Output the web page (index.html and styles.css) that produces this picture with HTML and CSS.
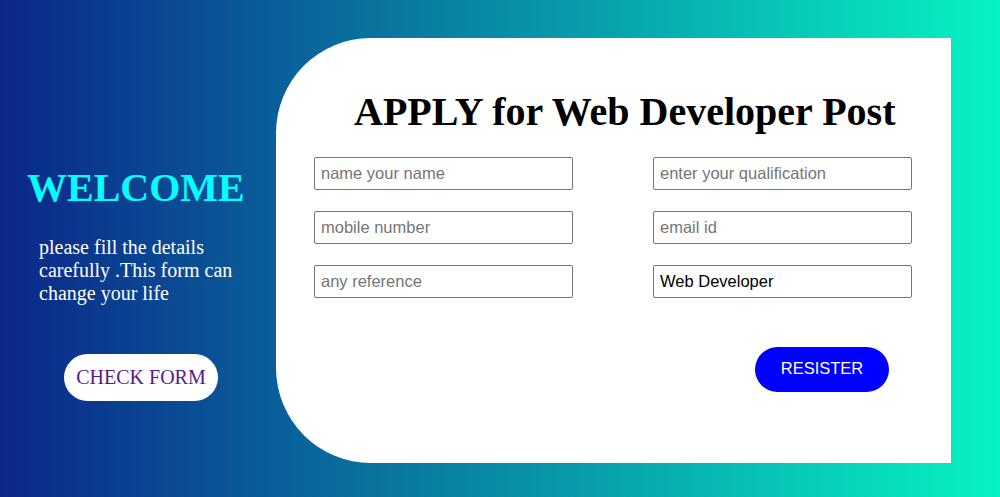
FILE: index.html
```html
<!DOCTYPE html>
<html>
<head>
<meta charset="utf-8">
<title>Apply</title>
<link rel="stylesheet" href="styles.css">
</head>
<body>
<div class="page">
  <div class="side">
    <h1 class="welcome">WELCOME</h1>
    <p class="intro">please fill the details carefully .This form can change your life</p>
    <a class="check" href="#">CHECK FORM</a>
  </div>
  <div class="card">
    <h1 class="title">APPLY for Web Developer Post</h1>
    <form class="fields">
      <input class="field" type="text" placeholder="name your name">
      <input class="field" type="text" placeholder="enter your qualification">
      <input class="field" type="text" placeholder="mobile number">
      <input class="field" type="text" placeholder="email id">
      <input class="field" type="text" placeholder="any reference">
      <input class="field" type="text" value="Web Developer">
    </form>
    <div class="actions">
      <button class="register" type="button">RESISTER</button>
    </div>
  </div>
</div>
</body>
</html>
```

FILE: styles.css
```css
html, body {
  margin: 0;
  padding: 0;
  height: 100%;
}
body {
  background: linear-gradient(to right, #0b2689, #06f3c3);
  font-family: "Liberation Serif", "Times New Roman", serif;
  overflow: hidden;
}
.page {
  display: flex;
  height: 497px;
}
.side {
  width: 276px;
  flex: none;
  padding-top: 164px;
  box-sizing: border-box;
  display: flex;
  flex-direction: column;
  align-items: flex-start;
}
.welcome {
  margin: 0 0 0 27px;
  font-size: 40px;
  font-weight: bold;
  color: #00ffff;
  line-height: normal;
}
.intro {
  margin: 25px 0 0 39px;
  width: 210px;
  font-size: 20px;
  color: #ffffff;
  line-height: 23px;
}
.check {
  margin: 49px 0 0 64px;
  width: 154px;
  height: 47px;
  box-sizing: border-box;
  background: #ffffff;
  border-radius: 24px;
  color: #551a8b;
  font-size: 20px;
  text-decoration: none;
  display: flex;
  align-items: center;
  justify-content: center;
}
.card {
  margin-top: 38px;
  width: 675px;
  height: 425px;
  flex: none;
  background: #ffffff;
  border-radius: 95px 0 0 95px;
  box-sizing: border-box;
  padding: 50px 0 0 38px;
}
.title {
  margin: 0 0 0 40px;
  font-size: 40px;
  font-weight: bold;
  color: #000000;
  line-height: normal;
}
.fields {
  margin: 22px 0 0 0;
  display: grid;
  grid-template-columns: 259px 259px;
  column-gap: 80px;
  row-gap: 21px;
}
.field {
  height: 33px;
  box-sizing: border-box;
  border: 1px solid #767676;
  border-radius: 2px;
  padding: 0 6px;
  font-family: "Liberation Sans", Arial, sans-serif;
  font-size: 16.5px;
  color: #000000;
  margin: 0;
}
.field::placeholder {
  color: #757575;
}
.actions {
  display: flex;
  justify-content: flex-end;
  margin: 49px 62px 0 0;
}
.register {
  width: 134px;
  height: 45px;
  border: none;
  border-radius: 23px;
  background: #0000ff;
  color: #ffffff;
  font-family: "Liberation Sans", Arial, sans-serif;
  font-size: 16.5px;
  line-height: 19px;
  padding: 0 0 2px 0;
}
```
